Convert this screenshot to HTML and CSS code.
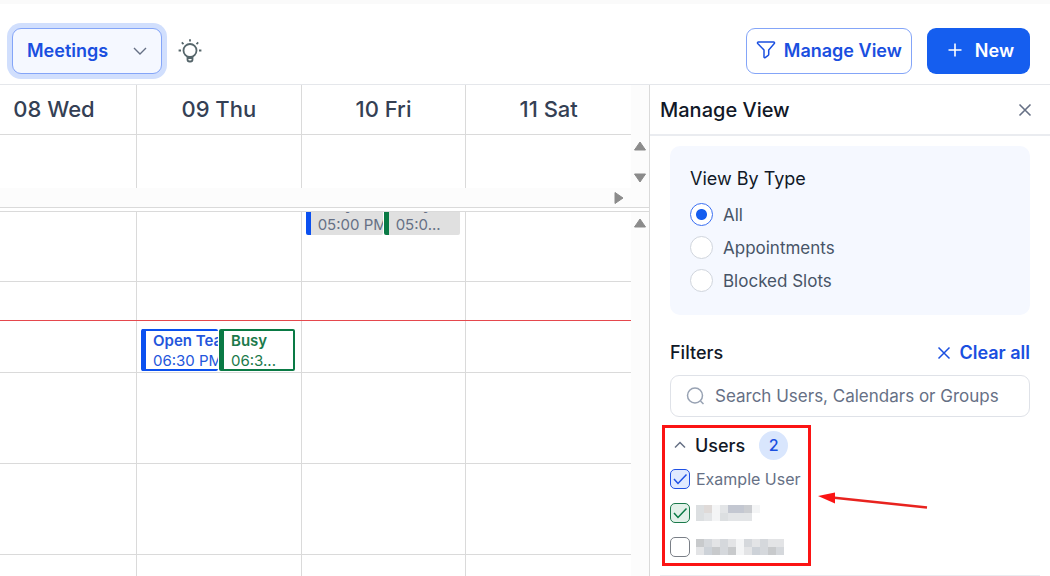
FILE: index.html
```html
<!DOCTYPE html>
<html lang="en">
<head>
  <meta charset="UTF-8">
  <meta name="viewport" content="width=device-width, initial-scale=1.0">
  <title>Calendar</title>
  <link rel="stylesheet" href="styles.css">
</head>
<body>
  <header class="toolbar">
    <div class="view-select">
      <select aria-label="Calendar type">
        <option>Meetings</option>
        <option>Tasks</option>
      </select>
      <svg class="chevron" width="14" height="8" viewBox="0 0 14 8"><path d="M1 1l6 6 6-6"/></svg>
    </div>
    <button class="tips-btn" aria-label="Tips">
      <svg width="24" height="24" viewBox="0 0 24 24">
        <circle cx="12" cy="11.500" r="6.500"/>
        <path d="M9.500 17.500v3a2 2 0 0 0 2 2h1a2 2 0 0 0 2-2v-3M9.800 19h4.400"/>
        <path d="M12 .2v2.400M3.800 3.400l1.700 1.700M20.200 3.400l-1.700 1.700M.6 11.500H3M21 11.500h2.400"/>
      </svg>
    </button>
    <button class="btn btn-outline">
      <svg width="20" height="20" viewBox="0 0 20 20"><path d="M2.400 2h15.200a.9.900 0 0 1 .7 1.500L12.700 10v4.500a1 1 0 0 1-.5.9l-3 2.200a.8.800 0 0 1-1.200-.7V10L1.700 3.500A.9.900 0 0 1 2.400 2z"/></svg>
      Manage View
    </button>
    <button class="btn btn-primary">
      <svg width="14" height="14" viewBox="0 0 14 14"><path d="M7 .5v13M.5 7h13"/></svg>
      New
    </button>
  </header>

  <main class="content">
    <section class="calendar">
      <div class="row days">
        <div class="cell">08 Wed</div>
        <div class="cell">09 Thu</div>
        <div class="cell">10 Fri</div>
        <div class="cell">11 Sat</div>
        <div class="gutter"></div>
      </div>
      <div class="all-day">
        <div class="row all-day-row">
          <div class="cell"></div>
          <div class="cell"></div>
          <div class="cell"></div>
          <div class="cell"></div>
          <div class="gutter">
            <svg width="14" height="10" viewBox="0 0 14 10"><path d="M7 1l5.500 8h-11z"/></svg>
            <svg width="14" height="10" viewBox="0 0 14 10"><path d="M7 9l5.500-8h-11z"/></svg>
          </div>
        </div>
        <div class="scroll-x">
          <svg width="10" height="14" viewBox="0 0 10 14"><path d="M9 7l-8 5.500v-11z"/></svg>
        </div>
      </div>

      <div class="row times">
        <div class="cell"></div>
        <div class="cell">
          <div class="event blue open">
            <strong>Open Team</strong>
            <span>06:30 PM</span>
          </div>
          <div class="event green open second">
            <strong>Busy</strong>
            <span>06:3...</span>
          </div>
        </div>
        <div class="cell">
          <div class="event blue past">
            <strong>Daily</strong>
            <span>05:00 PM</span>
          </div>
          <div class="event green past second">
            <strong>Busy</strong>
            <span>05:0...</span>
          </div>
        </div>
        <div class="cell"></div>
        <div class="gutter">
          <svg width="14" height="10" viewBox="0 0 14 10"><path d="M7 1l5.500 8h-11z"/></svg>
        </div>
        <div class="now-line"></div>
      </div>
    </section>

    <aside class="panel">
      <div class="panel-header">
        <h2>Manage View</h2>
        <button class="icon-btn" aria-label="Close">
          <svg width="14" height="14" viewBox="0 0 14 14"><path d="M1.500 1.500l11 11M12.500 1.500l-11 11"/></svg>
        </button>
      </div>

      <div class="panel-body">
        <fieldset class="type-card">
          <legend>View By Type</legend>
          <label><input type="radio" name="type" checked>All</label>
          <label><input type="radio" name="type">Appointments</label>
          <label><input type="radio" name="type">Blocked Slots</label>
        </fieldset>

        <div class="filters-header">
          <h3>Filters</h3>
          <button class="clear-btn">
            <svg width="14" height="14" viewBox="0 0 14 14"><path d="M1.500 1.500l11 11M12.500 1.500l-11 11"/></svg>
            Clear all
          </button>
        </div>

        <div class="search">
          <svg width="20" height="20" viewBox="0 0 20 20"><circle cx="9" cy="9.500" r="7.500"/><path d="M14.500 15l3 3"/></svg>
          <input type="text" aria-label="Search" placeholder="Search Users, Calendars or Groups">
        </div>

        <div class="users">
          <button class="group-toggle">
            <svg width="12" height="8" viewBox="0 0 12 8"><path d="M1 6.500l5-5 5 5"/></svg>
            Users
            <span class="count">2</span>
          </button>
          <label><input type="checkbox" checked>Example User</label>
          <label>
            <input type="checkbox" class="green-check" checked aria-label="Hidden user 1">
            <svg class="mosaic" width="88" height="16" viewBox="0 0 11 2" shape-rendering="crispEdges">
              <path fill="#dcdfe1" d="M0 0h1v2H0zM3 1h1v1H3z"/>
              <path fill="#dfdad8" d="M1 0h1v1H1z"/>
              <path fill="#e3e5e7" d="M1 1h1v1H1zM3 0h1v1H3zM4 1h3v1H4z"/>
              <path fill="#f4f5f6" d="M2 0h1v2H2zM7 0h1v1H7z"/>
              <path fill="#c3c7d1" d="M4 0h2v1H4z"/>
              <path fill="#cbcdd1" d="M6 0h1v1H6z"/>
            </svg>
          </label>
          <label>
            <input type="checkbox" aria-label="Hidden user 2">
            <svg class="mosaic" width="88" height="16" viewBox="0 0 11 2" shape-rendering="crispEdges">
              <path fill="#c8cacc" d="M0 0h1v1H0zM2 1h1v1H2zM4 1h1v1H4zM9 1h1v1H9z"/>
              <path fill="#d5d8dc" d="M1 0h1v1H1zM3 0h1v2H3zM6 0h1v1H6zM8 0h1v2H8zM10 1h1v1h-1z"/>
              <path fill="#e3e4e6" d="M0 1h1v1H0zM2 0h1v1H2zM4 0h1v1H4zM7 0h1v1H7zM6 1h1v1H6zM9 0h1v1H9zM10 0h1v1h-1z"/>
              <path fill="#cdd2d8" d="M1 1h1v1H1zM7 1h1v1H7z"/>
              <path fill="#f4f5f6" d="M5 0h1v2H5z"/>
            </svg>
          </label>
          <div class="highlight"></div>
          <svg class="arrow" width="112" height="20" viewBox="0 0 112 20">
            <path class="shaft" d="M14 5.600L109 15.600"/>
            <path class="head" d="M0 4L17 .5v11z"/>
          </svg>
        </div>
      </div>
    </aside>
  </main>
</body>
</html>
```
FILE: styles.css
```css
* {
  box-sizing: border-box;
}

body {
  margin: 0;
  height: 100vh;
  display: flex;
  flex-direction: column;
  overflow: hidden;
  background-color: #fff;
  color: #111827;
  font-family: Inter, "Liberation Sans", sans-serif;
  font-size: 18px;
}

button,
input,
select {
  font: inherit;
}

button {
  border: none;
  background: none;
  padding: 0;
  cursor: pointer;
}

svg {
  flex: none;
  display: block;
  fill: none;
  stroke: currentColor;
}

h2,
h3 {
  margin: 0;
  font-weight: 500;
}

/* Toolbar */
.toolbar {
  flex: none;
  display: flex;
  align-items: center;
  padding: 24px 20px 10px 12px;
  border-top: 4px solid #fafafa;
  border-bottom: 1px solid #e5e7eb;
}

.view-select {
  position: relative;
  width: 150px;
}

.view-select select {
  appearance: none;
  display: block;
  width: 100%;
  height: 46px;
  padding: 0 14px 2px;
  border: 1px solid #84a5f8;
  border-radius: 9px;
  background-color: #f5f8ff;
  color: #1a4fe0;
  font-weight: 600;
  box-shadow: 0 0 0 5px #d1dffd;
}

.chevron {
  position: absolute;
  right: 15px;
  top: 19px;
  color: #667085;
  stroke-width: 1.4;
  pointer-events: none;
}

.tips-btn {
  height: 24px;
  margin-left: 16px;
  margin-right: auto;
  color: #56666b;
  stroke-width: 1.8;
}

.btn {
  display: flex;
  align-items: center;
  height: 46px;
  border-radius: 9px;
  font-weight: 600;
}

.btn-outline {
  gap: 8px;
  padding: 0 9px 2px;
  border: 1px solid #84a5f8;
  color: #1a4fe0;
  stroke-width: 1.5;
}

.btn-primary {
  gap: 13px;
  margin-left: 15px;
  padding: 0 16px 2px 21px;
  background-color: #155eef;
  color: #fff;
  stroke-width: 1.6;
}

/* Calendar */
.content {
  flex: 1;
  display: flex;
  min-height: 0;
}

.calendar {
  flex: 1;
  min-width: 0;
  display: flex;
  flex-direction: column;
}

.row {
  display: grid;
  grid-template-columns: 137px repeat(3, minmax(0, 1fr)) 18px;
}

.cell {
  border-right: 1px solid #dadada;
}

.cell:nth-child(4) {
  border-right: none;
}

.gutter {
  display: flex;
  flex-direction: column;
  align-items: center;
  background-color: #fcfcfc;
}

.gutter svg,
.scroll-x svg {
  fill: #8b8b8b;
  stroke: #8b8b8b;
  stroke-linejoin: round;
}

.days .cell {
  height: 50px;
  border-bottom: 1px solid #dadada;
  color: #344054;
  font-size: 22px;
  font-weight: 500;
  line-height: 48px;
  text-align: center;
}

.days .cell:first-child {
  padding-right: 28px;
}

.all-day {
  flex: none;
  border-bottom: 1px solid #dadada;
}

.all-day-row {
  height: 53px;
}

.all-day-row .gutter {
  justify-content: space-between;
  padding: 6px 0 5px;
}

.scroll-x {
  display: flex;
  align-items: center;
  justify-content: flex-end;
  height: 19px;
  padding-right: 25px;
  background-color: #fcfcfc;
}

.times {
  position: relative;
  flex: 1;
  overflow: hidden;
  margin-top: 3px;
  border-top: 1px solid #dadada;
}

.times .cell {
  position: relative;
  background-image: linear-gradient(#dadada 1px, transparent 1px);
  background-size: 100% 91px;
  background-position: 0 69px;
}

.times .gutter {
  padding-top: 6px;
}

.now-line {
  position: absolute;
  top: 108px;
  left: 0;
  right: 18px;
  height: 1px;
  background-color: #e5484d;
}

.event {
  position: absolute;
  left: 4px;
  width: 77px;
  height: 42px;
  overflow: hidden;
  border-left: 5px solid;
  border-radius: 2px;
  font-size: 15px;
  line-height: 20px;
  white-space: nowrap;
}

.event strong,
.event span {
  display: block;
}

.event strong {
  font-weight: 600;
}

.event.second {
  left: 82px;
  width: 76px;
}

.event.open {
  top: 117px;
  padding-left: 7px;
  border-width: 2px 0 2px 5px;
  border-style: solid;
  background-color: #fff;
}

.event.open.second {
  border-right-width: 2px;
}

.event.past {
  top: -19px;
  padding: 2px 0 0 7px;
  background-color: #e0e0e0;
}

.event.past strong,
.event.past span {
  color: #667085;
}

.blue {
  border-color: #0b50f0;
  color: #2456dc;
}

.green {
  border-color: #0a7a45;
  color: #1b7a4b;
}

/* Manage view panel */
.panel {
  width: 401px;
  border-left: 1px solid #dadada;
}

.panel-header {
  display: flex;
  align-items: center;
  justify-content: space-between;
  height: 51px;
  padding: 0 18px 0 10px;
  border-bottom: 2px solid #eaecf0;
}

.panel-header h2 {
  font-size: 20px;
}

.icon-btn {
  color: #667085;
  stroke-width: 1.6;
}

.panel-body {
  padding: 10px 20px;
}

.type-card {
  display: flex;
  flex-direction: column;
  margin: 0;
  padding: 18px 20px;
  border: none;
  border-radius: 10px;
  background-color: #f5f8ff;
}

.type-card legend {
  float: left;
  padding: 0;
  margin-bottom: 4px;
  line-height: 30px;
}

.type-card label {
  display: flex;
  align-items: center;
  gap: 10px;
  height: 33px;
  color: #475467;
  font-size: 17px;
}

.type-card input {
  appearance: none;
  width: 23px;
  height: 23px;
  margin: 0;
  border: 1px solid #d0d5dd;
  border-radius: 50%;
  background-color: #fff;
}

.type-card input:checked {
  border-color: #3a6ff2;
  background-image: radial-gradient(circle, #155eef 5px, transparent 6px);
}

.filters-header {
  display: flex;
  align-items: center;
  justify-content: space-between;
  margin: 26px 0 10px;
  line-height: 24px;
}

.filters-header h3 {
  font-size: 18px;
}

.clear-btn {
  display: flex;
  align-items: center;
  gap: 8px;
  color: #1a4fe0;
  font-weight: 600;
  stroke-width: 1.5;
}

.search {
  display: flex;
  align-items: center;
  gap: 9px;
  height: 42px;
  padding: 0 15px;
  border: 1px solid #dfe2e8;
  border-radius: 9px;
  color: #98a2b3;
  stroke-width: 1.5;
}

.search input {
  flex: 1;
  min-width: 0;
  padding: 0;
  border: none;
  outline: none;
  font-size: 17px;
}

.search input::placeholder {
  color: #667085;
}

.users {
  position: relative;
  margin: 11px -10px 0;
  padding: 0 10px 11px;
  border-bottom: 1px solid #eaecf0;
}

.group-toggle {
  display: flex;
  align-items: center;
  gap: 9px;
  height: 34px;
  padding-left: 4px;
  color: #111827;
  font-weight: 500;
}

.group-toggle svg {
  color: #667085;
  stroke-width: 1.5;
}

.count {
  width: 29px;
  margin-left: 5px;
  border-radius: 50%;
  background-color: #d9e6fd;
  color: #1a4fe0;
  font-size: 16px;
  line-height: 29px;
}

.users label {
  display: flex;
  align-items: center;
  gap: 6px;
  height: 34px;
  color: #667085;
  font-size: 16px;
}

.users label input {
  appearance: none;
  width: 20px;
  height: 20px;
  margin: 0;
  border: 1px solid #7a7f87;
  border-radius: 5px;
}

.users label input:checked {
  border-color: #1f51e5;
  background: #e0eaff url("data:image/svg+xml,%3Csvg xmlns='http://www.w3.org/2000/svg' viewBox='0 0 18 18'%3E%3Cpath d='M3 9l4 4.500 8.500-9' fill='none' stroke='%231f51e5' stroke-width='1.500'/%3E%3C/svg%3E");
}

.users label input.green-check:checked {
  border-color: #1b7a4b;
  background: #e3f1e9 url("data:image/svg+xml,%3Csvg xmlns='http://www.w3.org/2000/svg' viewBox='0 0 18 18'%3E%3Cpath d='M3 9l4 4.500 8.500-9' fill='none' stroke='%230a7a45' stroke-width='1.500'/%3E%3C/svg%3E");
}

.mosaic {
  stroke: none;
}

.highlight {
  position: absolute;
  left: 2px;
  top: -3px;
  width: 149px;
  height: 141px;
  border: 3px solid #fb1414;
}

.arrow {
  position: absolute;
  left: 158px;
  top: 64px;
  overflow: visible;
}

.arrow .shaft {
  stroke: #e8231f;
  stroke-width: 2.5;
}

.arrow .head {
  fill: #fb1414;
  stroke: none;
}
```
